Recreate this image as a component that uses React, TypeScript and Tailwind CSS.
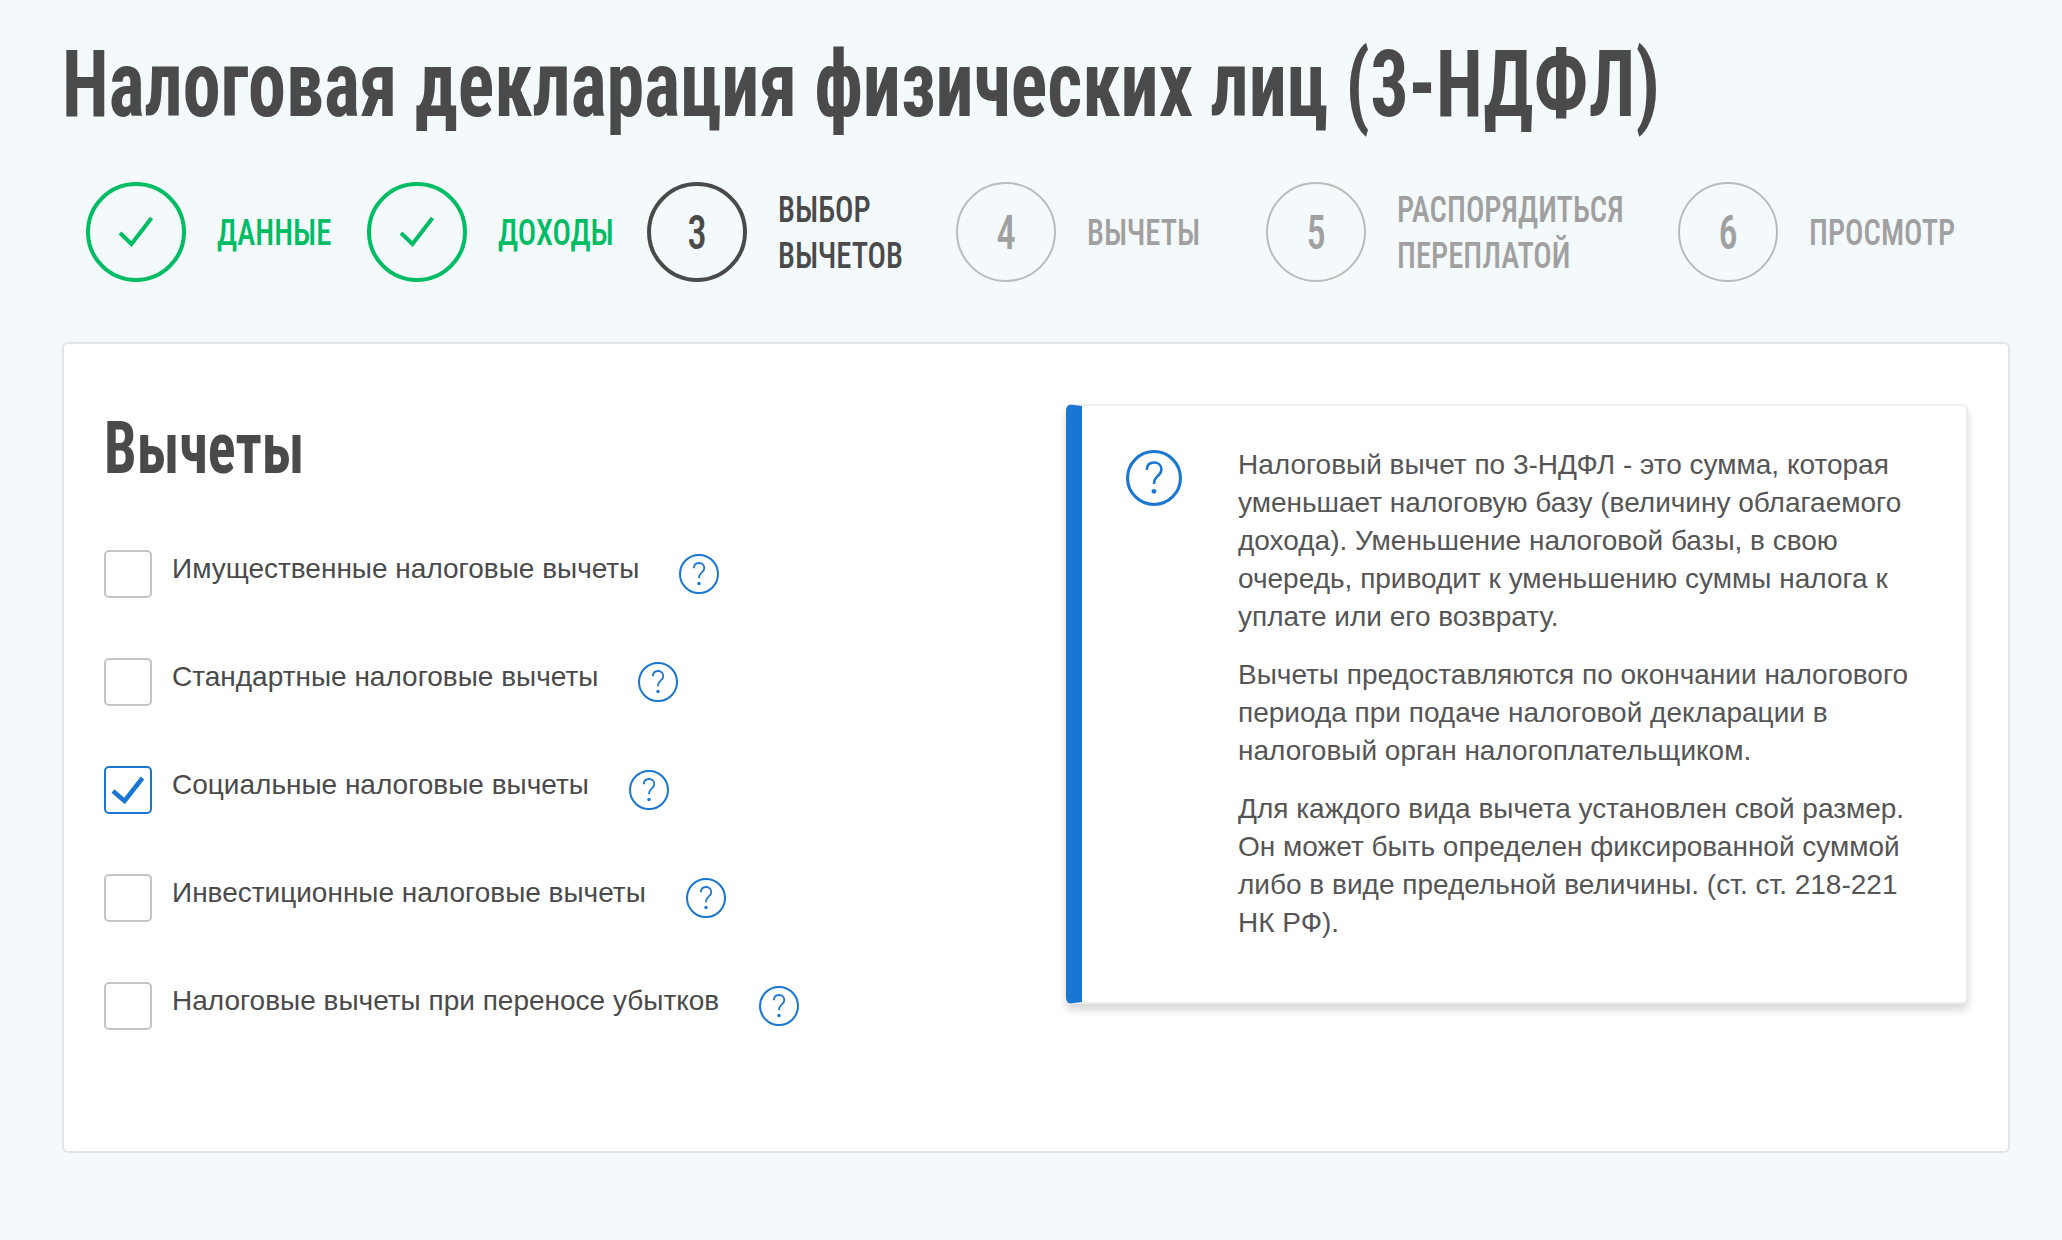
import React from "react";

const cond = "font-['Roboto_Condensed','Liberation_Sans',sans-serif]";

const StepCheck = () => (
  <svg width="36" height="32" viewBox="0 0 36 32" fill="none">
    <path d="M2 17 L13.5 28 L33.5 2" stroke="#00bc63" strokeWidth="4" />
  </svg>
);

const BoxCheck = () => (
  <svg width="34" height="28" viewBox="0 0 34 28" fill="none">
    <path d="M2 15 L13.5 25 L31.5 2" stroke="#1976d2" strokeWidth="4.5" />
  </svg>
);

const Q = ({ big }: { big?: boolean }) => (
  <svg width={big ? 56 : 40} height={big ? 56 : 40} viewBox="0 0 40 40" fill="none" className="shrink-0">
    <circle cx="20" cy="20" r={big ? 18.9 : 19} stroke="#1976d2" strokeWidth={big ? 2.2 : 2} />
    <path d="M14.8 14.2 C15 10.6 17.3 9 20 9 C23 9 25.3 11 25.3 14 C25.3 16.4 24 17.6 22.4 18.9 C20.8 20.2 20 21.2 20 24.2" stroke="#1976d2" strokeWidth="1.8" />
    <circle cx="20" cy="29.5" r="1.7" fill="#1976d2" />
  </svg>
);

const steps = [
  { n: "", t: ["ДАННЫЕ"], s: "done", w: "w-[150px]" },
  { n: "", t: ["ДОХОДЫ"], s: "done", w: "w-[149px]" },
  { n: "3", t: ["ВЫБОР", "ВЫЧЕТОВ"], s: "active", w: "w-[178px]" },
  { n: "4", t: ["ВЫЧЕТЫ"], s: "todo", w: "w-[179px]" },
  { n: "5", t: ["РАСПОРЯДИТЬСЯ", "ПЕРЕПЛАТОЙ"], s: "todo", w: "w-[281px]" },
  { n: "6", t: ["ПРОСМОТР"], s: "todo", w: "w-[160px]" },
];

const items = [
  ["Имущественные налоговые вычеты", false],
  ["Стандартные налоговые вычеты", false],
  ["Социальные налоговые вычеты", true],
  ["Инвестиционные налоговые вычеты", false],
  ["Налоговые вычеты при переносе убытков", false],
] as const;

export default function App() {
  return (
    <div className="min-h-[1240px] bg-[#f4f9fc] font-['Liberation_Sans',sans-serif] px-[62px] pt-[33px]">
      <h1 className={`${cond} text-[92px] leading-[104px] font-bold text-[#4a4a4a] whitespace-nowrap origin-left scale-x-[0.8275]`}>
        Налоговая декларация физических лиц (3-НДФЛ)
      </h1>
      <div className="flex mt-[45px] ml-[24px]">
        {steps.map((s, i) => (
          <div key={i} className="flex items-center">
            <div
              className={`w-[100px] h-[100px] shrink-0 rounded-full flex items-center justify-center ${cond} font-medium text-[48px] ${
                s.s === "done"
                  ? "border-4 border-[#00bc63]"
                  : s.s === "active"
                  ? "border-4 border-[#4a4a4a] text-[#4a4a4a]"
                  : "border-2 border-[#bbbbbb] text-[#a0a0a0]"
              }`}
            >
              {s.s === "done" ? <StepCheck /> : <span className="inline-block scale-x-[0.8] mt-[2px]">{s.n}</span>}
            </div>
            <div
              className={`${s.w} ml-[31px] mt-[2px] ${cond} font-medium text-[36px] leading-[46px] whitespace-nowrap ${
                s.s === "done" ? "text-[#00bc63]" : s.s === "active" ? "text-[#4a4a4a]" : "text-[#a0a0a0]"
              }`}
            >
              {s.t.map((l) => (
                <div key={l} className="origin-left scale-x-[0.85]">
                  {l}
                </div>
              ))}
            </div>
          </div>
        ))}
      </div>
      <div className="mt-[60px] w-[1948px] h-[811px] bg-white border-2 border-[#dfe5e9] rounded-[6px] flex pl-[40px] pt-[60px]">
        <div className="w-[962px]">
          <h2 className={`${cond} mt-[5px] font-bold text-[72px] leading-[80px] text-[#4a4a4a] origin-left scale-x-[0.809]`}>Вычеты</h2>
          <div className="mt-[61px] flex flex-col gap-[60px]">
            {items.map(([t, c]) => (
              <div key={t} className="flex items-center h-[48px]">
                <div className={`w-[48px] h-[48px] rounded-[5px] border-2 ${c ? "border-[#1976d2]" : "border-[#c4c4c4]"} flex items-center justify-center`}>
                  {c && <BoxCheck />}
                </div>
                <span className="ml-[20px] text-[28px] text-[#4a4a4a] mb-[10px]">{t}</span>
                <div className="ml-[40px]">
                  <Q />
                </div>
              </div>
            ))}
          </div>
        </div>
        <div className="w-[902px] h-[600px] bg-white rounded-[6px] border-2 border-[#eceff1] border-l-[16px] border-l-[#1976d2] shadow-[0_6px_8px_rgba(0,0,0,0.16)] flex pl-[44px] pt-[40px]">
          <div className="mt-[4px]">
            <Q big />
          </div>
          <div className="ml-[56px] w-[690px] text-[28px] leading-[38px] text-[#555555]">
            <p>Налоговый вычет по 3-НДФЛ - это сумма, которая уменьшает налоговую базу (величину облагаемого дохода). Уменьшение налоговой базы, в свою очередь, приводит к уменьшению суммы налога к уплате или его возврату.</p>
            <p className="mt-[20px]">Вычеты предоставляются по окончании налогового периода при подаче налоговой декларации в налоговый орган налогоплательщиком.</p>
            <p className="mt-[20px]">Для каждого вида вычета установлен свой размер. Он может быть определен фиксированной суммой либо в виде предельной величины. (ст. ст. 218-221 НК РФ).</p>
          </div>
        </div>
      </div>
    </div>
  );
}
